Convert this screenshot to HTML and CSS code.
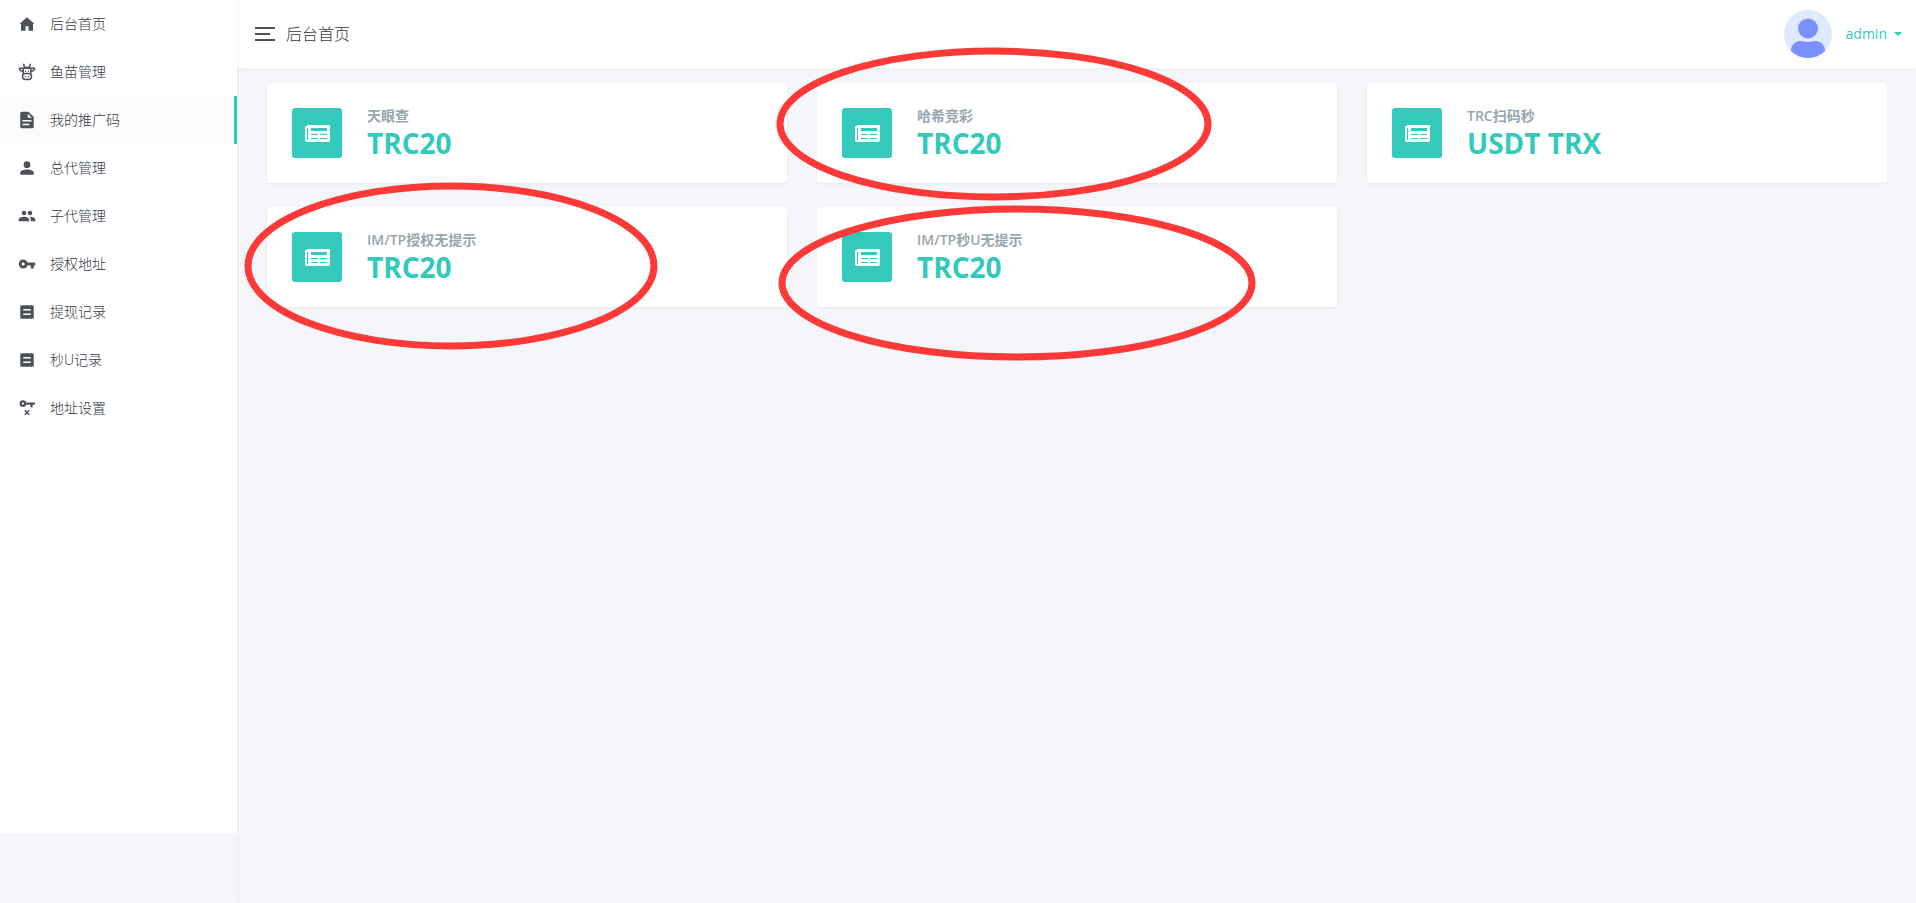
FILE: index.html
```html
<!DOCTYPE html>
<html lang="zh-CN">
<head>
    <meta charset="UTF-8">
    <meta name="viewport" content="width=device-width, initial-scale=1.0">
    <title>后台首页</title>
    <link rel="stylesheet" href="styles.css">
</head>
<body>
    <div class="layout">
        <!-- 左侧导航 -->
        <aside class="sidebar">
            <nav class="sidebar-scroll">
                <ul class="nav">
                    <li><a href="#"><svg viewBox="0 0 24 24"><path d="M10 21v-6h4v6h6v-9h2L12 3 2 12h2v9z"/></svg>后台首页</a></li>
                    <li><a href="#"><svg viewBox="0 0 24 24"><path fill="none" stroke="currentColor" stroke-width="2" d="M8 1c-1 3 0 4 2 5h4c2-1 3-2 2-5M7 7H2c0 3 2 4 5 4M17 7h5c0 3-2 4-5 4M7 6v9M17 6v9M8 7h8"/><rect x="6" y="14" width="12" height="8" rx="4" fill="none" stroke="currentColor" stroke-width="2"/><circle cx="10" cy="11" r="1"/><circle cx="14" cy="11" r="1"/><circle cx="10" cy="18" r="1"/><circle cx="14" cy="18" r="1"/></svg>鱼苗管理</a></li>
                    <li class="active"><a href="#"><svg viewBox="0 0 24 24"><path fill-rule="evenodd" d="M13 9h5.500L13 3.500zM5 1h9l7 7v13a2 2 0 0 1-2 2H5a2 2 0 0 1-2-2V3a2 2 0 0 1 2-2zm10 18v-2H6v2zm3-5v-2H6v2z"/></svg>我的推广码</a></li>
                    <li><a href="#"><svg viewBox="0 0 24 24"><path d="M12 3a4.500 4.500 0 1 1 0 9 4.500 4.500 0 0 1 0-9zm0 11c5 0 9 1.800 9 4v3H3v-3c0-2.200 4-4 9-4z"/></svg>总代管理</a></li>
                    <li><a href="#"><svg viewBox="0 0 24 24"><path d="M16 11c1.660 0 2.990-1.340 2.990-3S17.660 5 16 5s-3 1.340-3 3 1.340 3 3 3zm-8 0c1.660 0 2.990-1.340 2.990-3S9.660 5 8 5 5 6.340 5 8s1.340 3 3 3zm0 2c-2.330 0-7 1.170-7 3.500V19h14v-2.500c0-2.330-4.670-3.500-7-3.500zm8 0c-.29 0-.62.02-.97.05 1.160.84 1.970 1.970 1.970 3.450V19h6v-2.500c0-2.330-4.670-3.500-7-3.500z"/></svg>子代管理</a></li>
                    <li><a href="#"><svg viewBox="0 0 24 24"><path d="M12.650 10C11.830 7.670 9.610 6 7 6c-3.310 0-6 2.690-6 6s2.690 6 6 6c2.610 0 4.830-1.670 5.650-4H17v4h4v-4h2v-4H12.650zM7 14c-1.100 0-2-.9-2-2s.9-2 2-2 2 .9 2 2-.9 2-2 2z"/></svg>授权地址</a></li>
                    <li><a href="#"><svg viewBox="0 0 24 24"><path fill-rule="evenodd" d="M5 3h14a2 2 0 0 1 2 2v14a2 2 0 0 1-2 2H5a2 2 0 0 1-2-2V5a2 2 0 0 1 2-2zm2 5v2h10V8zm0 6v2h10v-2z"/></svg>提现记录</a></li>
                    <li><a href="#"><svg viewBox="0 0 24 24"><path fill-rule="evenodd" d="M5 3h14a2 2 0 0 1 2 2v14a2 2 0 0 1-2 2H5a2 2 0 0 1-2-2V5a2 2 0 0 1 2-2zm2 5v2h10V8zm0 6v2h10v-2z"/></svg>秒U记录</a></li>
                    <li><a href="#"><svg viewBox="0 0 24 24"><path fill="none" stroke="currentColor" stroke-width="3" d="M9.500 6a3 3 0 1 0-6 0 3 3 0 0 0 6 0h13M18 6v5"/><path fill="none" stroke="currentColor" stroke-width="2" d="M9 15l6 6M15 15l-6 6"/></svg>地址设置</a></li>
                </ul>
            </nav>
        </aside>

        <div class="page">
            <!-- 头部 -->
            <header class="topbar">
                <button class="toggler" type="button" aria-label="菜单">
                    <span></span>
                    <span class="short"></span>
                    <span></span>
                </button>
                <h1 class="page-title">后台首页</h1>
                <a class="user" href="#">
                    <svg class="avatar" viewBox="0 0 48 48">
                        <defs><clipPath id="round"><circle cx="24" cy="24" r="24"/></clipPath></defs>
                        <g clip-path="url(#round)">
                            <rect width="48" height="48" fill="#dfeaff"/>
                            <circle cx="24" cy="18.500" r="10" fill="#7b90ff"/>
                            <path fill="#7b90ff" d="M7 48v-7c0-6 4-10 10-10 3 0 4 1 7 1s4-1 7-1c6 0 10 4 10 10v7z"/>
                        </g>
                    </svg>
                    <span>admin</span>
                    <i class="caret"></i>
                </a>
            </header>

            <!-- 卡片 -->
            <main class="cards">
                <a class="card" href="#">
                    <span class="card-icon"><svg viewBox="0 0 26 17"><path fill-rule="evenodd" d="M4 0h21a1 1 0 0 1 1 1v14a2 2 0 0 1-2 2H3a2 2 0 0 1-2-2V2a1 1 0 0 1 1-1h1a1 1 0 0 1 1-1zM3 3v12h1V3zm4 0v3h16V3zm0 6v1h7V9zm9 0v1h7V9zm-9 4v1h7v-1zm9 0v1h7v-1z"/></svg></span>
                    <span class="card-text"><span class="card-label">天眼查</span><strong>TRC20</strong></span>
                </a>
                <a class="card" href="#">
                    <span class="card-icon"><svg viewBox="0 0 26 17"><path fill-rule="evenodd" d="M4 0h21a1 1 0 0 1 1 1v14a2 2 0 0 1-2 2H3a2 2 0 0 1-2-2V2a1 1 0 0 1 1-1h1a1 1 0 0 1 1-1zM3 3v12h1V3zm4 0v3h16V3zm0 6v1h7V9zm9 0v1h7V9zm-9 4v1h7v-1zm9 0v1h7v-1z"/></svg></span>
                    <span class="card-text"><span class="card-label">哈希竞彩</span><strong>TRC20</strong></span>
                </a>
                <a class="card" href="#">
                    <span class="card-icon"><svg viewBox="0 0 26 17"><path fill-rule="evenodd" d="M4 0h21a1 1 0 0 1 1 1v14a2 2 0 0 1-2 2H3a2 2 0 0 1-2-2V2a1 1 0 0 1 1-1h1a1 1 0 0 1 1-1zM3 3v12h1V3zm4 0v3h16V3zm0 6v1h7V9zm9 0v1h7V9zm-9 4v1h7v-1zm9 0v1h7v-1z"/></svg></span>
                    <span class="card-text"><span class="card-label">TRC扫码秒</span><strong>USDT TRX</strong></span>
                </a>
                <a class="card" href="#">
                    <span class="card-icon"><svg viewBox="0 0 26 17"><path fill-rule="evenodd" d="M4 0h21a1 1 0 0 1 1 1v14a2 2 0 0 1-2 2H3a2 2 0 0 1-2-2V2a1 1 0 0 1 1-1h1a1 1 0 0 1 1-1zM3 3v12h1V3zm4 0v3h16V3zm0 6v1h7V9zm9 0v1h7V9zm-9 4v1h7v-1zm9 0v1h7v-1z"/></svg></span>
                    <span class="card-text"><span class="card-label">IM/TP授权无提示</span><strong>TRC20</strong></span>
                </a>
                <a class="card" href="#">
                    <span class="card-icon"><svg viewBox="0 0 26 17"><path fill-rule="evenodd" d="M4 0h21a1 1 0 0 1 1 1v14a2 2 0 0 1-2 2H3a2 2 0 0 1-2-2V2a1 1 0 0 1 1-1h1a1 1 0 0 1 1-1zM3 3v12h1V3zm4 0v3h16V3zm0 6v1h7V9zm9 0v1h7V9zm-9 4v1h7v-1zm9 0v1h7v-1z"/></svg></span>
                    <span class="card-text"><span class="card-label">IM/TP秒U无提示</span><strong>TRC20</strong></span>
                </a>
            </main>
        </div>

        <!-- 红圈标注 -->
        <svg class="marks">
            <ellipse cx="994" cy="124" rx="214" ry="73"/>
            <ellipse cx="451" cy="266" rx="203" ry="80"/>
            <ellipse cx="1017" cy="283" rx="235" ry="74"/>
        </svg>
    </div>
</body>
</html>
```
FILE: styles.css
```css
*{
    margin: 0;
    padding: 0;
    box-sizing: border-box;
}
body {
    background-color: #f4f6fa;
    color: #33383f;
    font-family: "Open Sans", "Noto Sans CJK SC", sans-serif;
    font-size: 14px;
    line-height: 20px;
}
a {
    color: inherit;
    text-decoration: none;
}
.layout {
    position: relative;
    display: flex;
    min-height: 100vh;
}

/* 左侧导航 */
.sidebar {
    flex: 0 0 237px;
    box-shadow: 0 0 5px rgba(0, 0, 0, .08);
    z-index: 2;
}
.sidebar-scroll {
    height: calc(100vh - 70px);
    background-color: #fff;
}
.nav {
    list-style: none;
    font-weight: 300;
}
.nav a {
    display: flex;
    align-items: center;
    gap: 14px;
    height: 48px;
    padding-left: 18px;
    border-right: 3px solid transparent;
}
.nav .active a {
    background-color: #fcfcfc;
    border-right-color: #33cabb;
}
.nav svg {
    width: 18px;
    height: 18px;
    color: #4d5259;
    fill: currentColor;
}

/* 头部 */
.page {
    flex: 1;
    min-width: 0;
}
.topbar {
    display: flex;
    align-items: center;
    height: 68px;
    padding: 0 14px 0 18px;
    background-color: #fff;
    box-shadow: 0 1px 3px rgba(0, 0, 0, .04);
}
.toggler {
    display: flex;
    flex-direction: column;
    gap: 4px;
    border: none;
    background: none;
    cursor: pointer;
}
.toggler span {
    width: 20px;
    height: 2px;
    background-color: #4d5259;
}
.toggler .short {
    width: 15px;
}
.page-title {
    margin-left: 11px;
    font-size: 16px;
    font-weight: 300;
}
.user {
    display: flex;
    align-items: center;
    margin-left: auto;
    color: #33cabb;
}
.avatar {
    width: 48px;
    height: 48px;
    margin-right: 14px;
}
.caret {
    margin-left: 7px;
    border: 4px solid transparent;
    border-top-color: #33cabb;
    border-bottom: none;
}

/* 卡片 */
.cards {
    display: grid;
    grid-template-columns: repeat(3, 1fr);
    gap: 24px 30px;
    padding: 15px 29px 24px 30px;
}
.card {
    display: flex;
    gap: 25px;
    height: 100px;
    padding: 25px;
    border-radius: 3px;
    background-color: #fff;
    box-shadow: 0 1px 3px rgba(0, 0, 0, .06);
}
.card-icon {
    display: flex;
    align-items: center;
    justify-content: center;
    width: 50px;
    height: 50px;
    border-radius: 3px;
    background-color: #33cabb;
}
.card-icon svg {
    width: 26px;
    height: 17px;
    fill: #fff;
}
.card-text {
    display: flex;
    flex-direction: column;
    color: #33cabb;
}
.card-label {
    color: #98a6ad;
    font-size: 14px;
    font-weight: 600;
    line-height: 16px;
}
.card-text strong {
    font-size: 28px;
    line-height: 38px;
}

/* 红圈标注 */
.marks {
    position: absolute;
    top: 0;
    left: 0;
    width: 100%;
    height: 100%;
    fill: none;
    stroke: #fd3a38;
    stroke-width: 7px;
    pointer-events: none;
    z-index: 3;
}
```
